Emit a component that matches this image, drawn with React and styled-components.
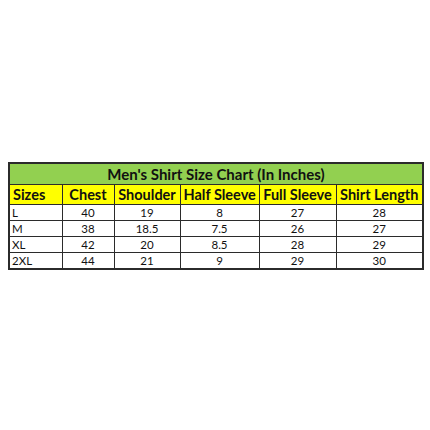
import styled, { createGlobalStyle } from "styled-components";

const Global = createGlobalStyle`
  body {
    margin: 0;
    background: #ffffff;
    font-family: Lato, "Open Sans", sans-serif;
  }
`;

const Page = styled.div`
  width: 430px;
  height: 430px;
  padding: 162px 0 0 8px;
  box-sizing: border-box;
`;

const Table = styled.table`
  border-collapse: collapse;
  table-layout: fixed;
  width: 414px;
  border: 2px solid #2b2b2b;
  color: #111;
`;

const TitleCell = styled.th`
  background: #92d050;
  height: 20px;
  padding: 0;
  font-size: 15px;
  font-weight: 700;
  text-align: center;
  border: 1px solid #2b2b2b;
  line-height: 20px;
`;

const HeadCell = styled.th`
  background: #ffff00;
  height: 19px;
  padding: 0 3px;
  font-size: 14.5px;
  font-weight: 700;
  text-align: ${(p) => (p.left ? "left" : "center")};
  border: 1px solid #2b2b2b;
  line-height: 19px;
  white-space: nowrap;
`;

const Cell = styled.td`
  height: 15px;
  padding: 0 2px;
  font-size: 11.5px;
  line-height: 15px;
  text-align: ${(p) => (p.left ? "left" : "center")};
  border: 1px solid #2b2b2b;
`;

const widths = [53, 52, 66, 79, 77, 87];
const heads = ["Sizes", "Chest", "Shoulder", "Half Sleeve", "Full Sleeve", "Shirt Length"];
const rows = [
  ["L", "40", "19", "8", "27", "28"],
  ["M", "38", "18.5", "7.5", "26", "27"],
  ["XL", "42", "20", "8.5", "28", "29"],
  ["2XL", "44", "21", "9", "29", "30"],
];

export default function App() {
  return (
    <>
      <Global />
      <Page>
        <Table>
          <colgroup>
            {widths.map((w, i) => (
              <col key={i} style={{ width: w }} />
            ))}
          </colgroup>
          <thead>
            <tr>
              <TitleCell colSpan={6}>Men's Shirt Size Chart (In Inches)</TitleCell>
            </tr>
            <tr>
              {heads.map((h, i) => (
                <HeadCell key={h} left={i === 0}>
                  {h}
                </HeadCell>
              ))}
            </tr>
          </thead>
          <tbody>
            {rows.map((r) => (
              <tr key={r[0]}>
                {r.map((v, i) => (
                  <Cell key={i} left={i === 0}>
                    {v}
                  </Cell>
                ))}
              </tr>
            ))}
          </tbody>
        </Table>
      </Page>
    </>
  );
}
